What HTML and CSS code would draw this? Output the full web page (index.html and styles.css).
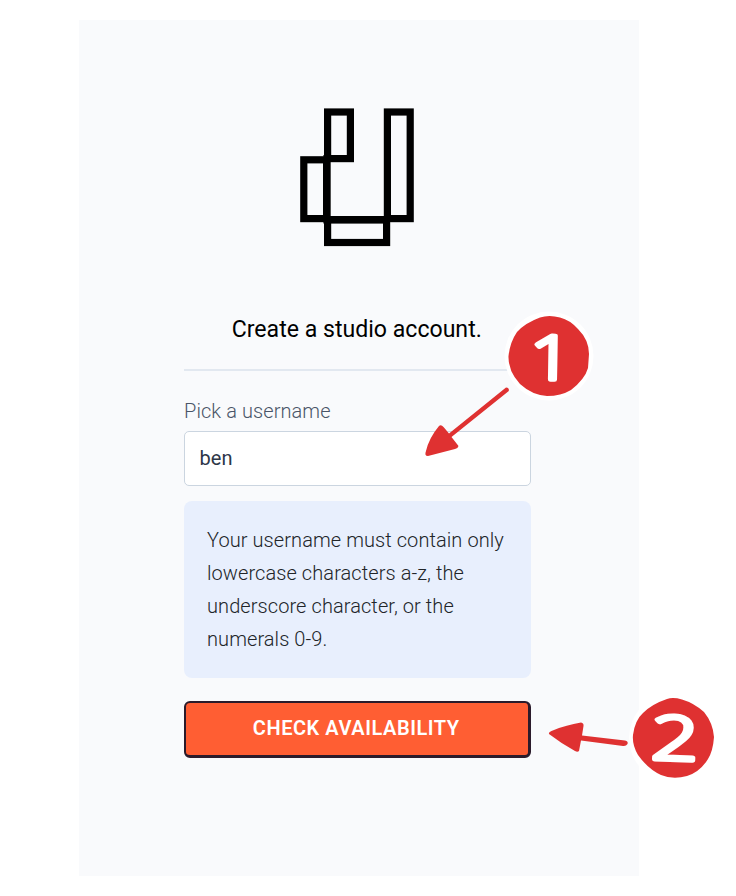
FILE: index.html
```html
<!DOCTYPE html>
<html lang="en">
<head>
<meta charset="utf-8">
<title>Create a studio account</title>
<link rel="stylesheet" href="styles.css">
</head>
<body>
<main class="panel">
  <svg class="logo" width="116" height="140" viewBox="299 107 116 140" fill="none" stroke="#000" stroke-width="7.2">
    <rect x="327.6" y="112" width="22.8" height="46.6"/>
    <rect x="387.4" y="112" width="22.8" height="106.6"/>
    <rect x="303.8" y="159.8" width="22.8" height="58.8"/>
    <path d="M327 155v64.800h60"/>
    <rect x="327.600" y="219.600" width="59" height="22.900"/>
  </svg>
  <h1 class="title">Create a studio account.</h1>
  <form class="form">
    <label class="label" for="username">Pick a username</label>
    <input class="input" id="username" type="text" value="ben">
    <p class="hint">Your username must contain only lowercase characters a-z, the underscore character, or the numerals 0-9.</p>
    <button class="button" type="button">CHECK AVAILABILITY</button>
  </form>
</main>
<svg class="notes" width="736" height="896" viewBox="0 0 736 896">
  <circle cx="549" cy="356" r="44.500" fill="#fff"/>
  <path class="red" d="M540 317.500Q549 314.500 560 317.500Q570 320 578 329Q589 340 589 354L588 368Q585 379 571 390Q561 396 547 396Q532 395 520 384Q508 371 508.500 356Q510 342 517 332Q525 323 540 317.500Z"/>
  <text class="digit" transform="translate(529.500 379) rotate(1) scale(1.22 1)" font-size="61">1</text>
  <path class="red" d="M506 387.500Q509.500 387.500 508.800 391L451.500 437L458.500 446Q458 448.500 455 449L428 456Q424 456 426 451Q429 438 439 426Q441 424 443.500 427L449 433.500Z"/>
  <circle cx="673.500" cy="738" r="44.500" fill="#fff"/>
  <path class="red" d="M667 699Q673 697 682 699.500Q694 703 704 712Q713 723 714 737Q713 751 708 759Q700 772 687 776Q673 780 661 775Q648 769 638 755Q632 745 633 735Q635 720 643 713Q652 704 667 699Z"/>
  <text class="digit" transform="translate(650.500 759) rotate(2) scale(1.36 1)" font-size="61">2</text>
  <path class="red" d="M549 734Q548 732 554 730Q566 725 581 722.500Q584 723 583.500 726L582 735.500L625 740.500Q628.500 741 627.500 744Q626 746.500 623 746L581 740.500L579 751Q577.500 752.500 575 751Q562 744 549 734Z"/>
</svg>
</body>
</html>
```
FILE: styles.css
```css
* {
  box-sizing: border-box;
}

body {
  margin: 0;
  padding-top: 20px;
  position: relative;
  min-height: 896px;
  background: #fff;
  font-family: Roboto, "Liberation Sans", sans-serif;
}

.panel {
  width: 560px;
  height: 856px;
  margin-left: 79px;
  padding: 87px 108.5px 0 105px;
  background: #f9fafc;
  display: flex;
  flex-direction: column;
}

.logo {
  align-self: center;
}

.title {
  margin: 65px 0 0;
  padding: 0 1px 21px 0;
  border-bottom: 2px solid #e2e8f0;
  font-size: 23.1px;
  font-weight: 400;
  line-height: 36px;
  text-align: center;
  color: #000;
  white-space: nowrap;
}

.form {
  display: flex;
  flex-direction: column;
}

.label {
  margin-top: 27px;
  font-size: 20px;
  font-weight: 300;
  line-height: 26px;
  letter-spacing: 0.08px;
  color: #4a5568;
}

.input {
  height: 55px;
  margin: 7px 0 0;
  padding: 0 14.5px 1px;
  border: 1.500px solid #cbd5e0;
  border-radius: 5px;
  background: #fff;
  font: 400 20px/30px Roboto, "Liberation Sans", sans-serif;
  letter-spacing: 0.1px;
  color: #2d3748;
}

.hint {
  height: 177px;
  margin: 15px 0 0;
  padding: 23px;
  border-radius: 8px;
  background: #e8effd;
  font-size: 20px;
  font-weight: 300;
  line-height: 32.9px;
  letter-spacing: 0.08px;
  color: #212529;
}

.button {
  height: 57px;
  margin: 23px 0 0;
  padding: 0 1px 2px 0;
  border: solid #2b1b2b;
  border-width: 2px 3px 3px 2px;
  border-radius: 6px;
  background: #ff5e33;
  font: 600 20px/30px Roboto, "Liberation Sans", sans-serif;
  letter-spacing: 0.55px;
  color: #fff;
}

.notes {
  position: absolute;
  top: 0;
  left: 0;
  pointer-events: none;
}

.red {
  fill: #df3131;
}

.digit {
  font-family: "Open Sans", "Noto Sans", sans-serif;
  font-weight: 300;
  fill: #fff;
  stroke: #fff;
  stroke-width: 4.5px;
  stroke-linejoin: round;
}
```
